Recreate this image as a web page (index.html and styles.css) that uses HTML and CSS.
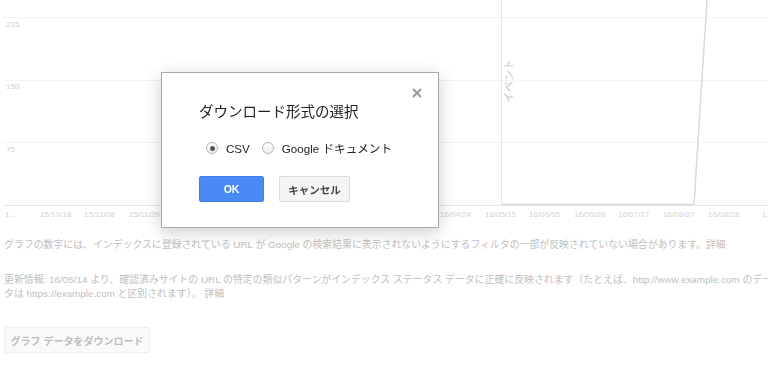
FILE: index.html
```html
<!DOCTYPE html>
<html lang="ja">
<head>
<meta charset="utf-8">
<title>ダウンロード形式の選択</title>
<link rel="stylesheet" href="styles.css">
</head>
<body>
<div class="page">
  <div class="chart">
    <svg class="chart-svg" width="768" height="225" viewBox="0 0 768 225">
      <g class="grid">
        <line x1="3" y1="17.5" x2="768" y2="17.5"/>
        <line x1="3" y1="80.5" x2="768" y2="80.5"/>
        <line x1="3" y1="142.5" x2="768" y2="142.5"/>
      </g>
      <line class="axis" x1="3" y1="205.5" x2="768" y2="205.5"/>
      <g class="ylab">
        <text x="6" y="27">225</text>
        <text x="6" y="89">150</text>
        <text x="6" y="152">75</text>
      </g>
      <line class="event" x1="501.5" y1="0" x2="501.5" y2="205"/>
      <text class="event-label" x="513" y="103" transform="rotate(-90 513 103)">イベント</text>
      <polyline class="data" points="502,204.5 694,204.5 707,0"/>
      <g class="xlab">
        <text x="5" y="217">1...</text>
        <text x="40" y="217">15/10/18</text>
        <text x="84" y="217">15/11/08</text>
        <text x="129" y="217">15/11/29</text>
        <text x="173" y="217">15/12/20</text>
        <text x="218" y="217">16/01/10</text>
        <text x="262" y="217">16/01/31</text>
        <text x="306" y="217">16/02/21</text>
        <text x="351" y="217">16/03/13</text>
        <text x="395" y="217">16/04/03</text>
        <text x="440" y="217">16/04/24</text>
        <text x="485" y="217">16/05/15</text>
        <text x="529" y="217">16/06/05</text>
        <text x="574" y="217">16/06/26</text>
        <text x="618" y="217">16/07/17</text>
        <text x="663" y="217">16/08/07</text>
        <text x="708" y="217">16/08/28</text>
        <text x="762" y="217">1.</text>
      </g>
    </svg>
  </div>
  <div class="notes">
    <p class="note">グラフの数字には、インデックスに登録されている URL が Google の検索結果に表示されないようにするフィルタの一部が反映されていない場合があります。詳細</p>
    <p class="note">更新情報: 16/05/14 より、確認済みサイトの URL の特定の類似パターンがインデックス ステータス データに正確に反映されます（たとえば、http://www.example.com のデー<br>タは https://example.com と区別されます）。 詳細</p>
  </div>
  <button class="dl-btn" type="button">グラフ データをダウンロード</button>
</div>

<div class="backdrop">
  <div class="dialog" role="dialog">
    <button class="close" type="button" aria-label="閉じる">
      <svg width="10" height="10" viewBox="0 0 10 10"><path d="M1 1 L9 9 M9 1 L1 9" stroke="#9a9a9a" stroke-width="2" fill="none"/></svg>
    </button>
    <h2 class="dlg-title">ダウンロード形式の選択</h2>
    <div class="options">
      <label class="opt"><span class="radio checked"></span><span class="opt-text">CSV</span></label>
      <label class="opt"><span class="radio"></span><span class="opt-text">Google ドキュメント</span></label>
    </div>
    <div class="actions">
      <button class="btn btn-ok" type="button">OK</button>
      <button class="btn btn-cancel" type="button">キャンセル</button>
    </div>
  </div>
</div>
</body>
</html>
```

FILE: styles.css
```css
html, body {
  margin: 0;
  padding: 0;
  background: #fff;
  overflow: hidden;
}
body {
  width: 768px;
  height: 368px;
  font-family: "Liberation Sans", "Noto Sans CJK JP", sans-serif;
}
.page {
  display: flex;
  flex-direction: column;
  align-items: flex-start;
}
.chart {
  height: 225px;
}
.chart-svg {
  display: block;
}
.grid line {
  stroke: #f3f3f3;
  stroke-width: 1;
}
.axis {
  stroke: #e6e6e6;
  stroke-width: 1;
}
.event {
  stroke: #e4e4e4;
  stroke-width: 1;
}
.data {
  fill: none;
  stroke: #d9d9d9;
  stroke-width: 1.5;
}
.ylab text, .xlab text {
  font-family: "Liberation Sans", sans-serif;
  font-size: 8px;
  fill: #d2d2d2;
}
.event-label {
  font-family: "Noto Sans CJK JP", sans-serif;
  font-size: 11px;
  fill: #c8c8c8;
}
.notes {
  margin-top: 13px;
  padding-left: 4px;
  display: flex;
  flex-direction: column;
  gap: 21px;
}
.note {
  margin: 0;
  font-size: 9.9px;
  line-height: 14px;
  color: #c0c0c0;
  white-space: nowrap;
}
.dl-btn {
  margin: 26px 0 0 4px;
  width: 146px;
  height: 26px;
  padding: 0;
  border: 1px solid #eeeeee;
  border-radius: 2px;
  background: #fafafa;
  color: #bdbdbd;
  font-family: "Liberation Sans", "Noto Sans CJK JP", sans-serif;
  font-size: 10px;
  font-weight: bold;
}

.backdrop {
  position: fixed;
  inset: 0;
}
.dialog {
  position: absolute;
  left: 161px;
  top: 72px;
  width: 278px;
  height: 156px;
  box-sizing: border-box;
  background: #fff;
  border: 1px solid #a9a9a9;
  box-shadow: 0 4px 16px rgba(0, 0, 0, 0.2);
  padding: 29px 37px 0 37px;
  display: flex;
  flex-direction: column;
}
.close {
  position: absolute;
  top: 15px;
  right: 16px;
  width: 10px;
  height: 10px;
  padding: 0;
  border: 0;
  background: none;
  display: block;
}
.close svg {
  display: block;
}
.dlg-title {
  margin: 0;
  font-size: 14.5px;
  line-height: 20px;
  font-weight: normal;
  color: #222;
}
.options {
  margin-top: 18px;
  padding-left: 7px;
  display: flex;
  align-items: center;
  gap: 12px;
  height: 16px;
}
.opt {
  display: flex;
  align-items: center;
  gap: 8px;
  font-size: 11.6px;
  color: #222;
}
.radio {
  width: 12px;
  height: 12px;
  box-sizing: border-box;
  border: 1px solid #b5b5b5;
  border-radius: 50%;
  background: linear-gradient(#fdfdfd, #f0f0f0);
  display: flex;
  align-items: center;
  justify-content: center;
}
.radio.checked::after {
  content: "";
  width: 5px;
  height: 5px;
  border-radius: 50%;
  background: #555;
}
.actions {
  margin-top: 20px;
  display: flex;
  gap: 15px;
}
.btn {
  height: 26px;
  padding: 0;
  border-radius: 2px;
  font-family: "Liberation Sans", "Noto Sans CJK JP", sans-serif;
  font-size: 10.5px;
  font-weight: bold;
}
.btn-ok {
  width: 65px;
  background: #4a8af4;
  border: 1px solid #3f7ee8;
  color: #fff;
}
.btn-cancel {
  width: 71px;
  background: #f5f5f5;
  border: 1px solid #dcdcdc;
  color: #444;
}
```
